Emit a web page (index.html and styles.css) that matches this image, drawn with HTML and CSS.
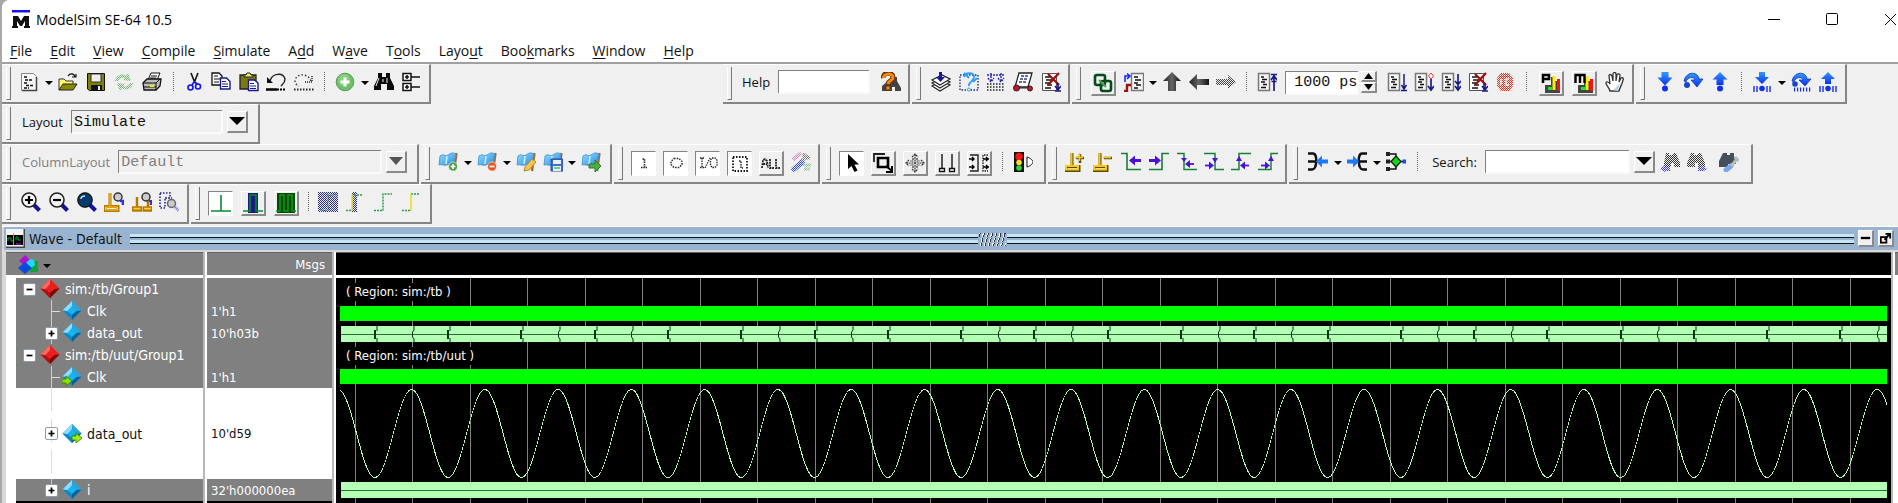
FILE: index.html
```html
<!DOCTYPE html>
<html lang="en">
<head>
<meta charset="utf-8">
<title>ModelSim SE-64 10.5</title>
<link rel="stylesheet" href="styles.css">
</head>
<body>
<svg class="defs" aria-hidden="true">
<defs>
<linearGradient id="gBlue" x1="0" y1="0" x2="1" y2="1"><stop offset="0" stop-color="#8fe0ff"/><stop offset="1" stop-color="#2b8be0"/></linearGradient>
<linearGradient id="gArrow" x1="0" y1="0" x2="0" y2="1"><stop offset="0" stop-color="#2f9bff"/><stop offset="1" stop-color="#1030f0"/></linearGradient>
<linearGradient id="gDark" x1="0" y1="0" x2="1" y2="0"><stop offset="0" stop-color="#222"/><stop offset=".5" stop-color="#666"/><stop offset="1" stop-color="#111"/></linearGradient>
<pattern id="dith" width="2" height="2" patternUnits="userSpaceOnUse"><path fill="#f0f0f0" d="M0 0h1v1H0zM1 1h1v1H1z"/></pattern>
<pattern id="dithBlue" width="2" height="2" patternUnits="userSpaceOnUse"><path fill="#2a2a90" d="M0 0h1v1H0zM1 1h1v1H1z"/></pattern>
<symbol id="page" viewBox="0 0 20 20"><path d="M2.500 1.500h12l3 3v14h-15z" fill="#f6f6f6" stroke="#888"/><path d="M17.500 5v13.500H3" fill="none" stroke="#444" stroke-width="1.500"/><path d="M5 5h4M6 8h8M5 11h4M7 13.500h7M5 16h5" stroke="#111" stroke-width="1.400" stroke-dasharray="3 1"/></symbol>
<symbol id="open" viewBox="0 0 20 20"><path d="M1 18V7h5l2 2h7v3" fill="#ffff70" stroke="#333"/><path d="M1 18l4-6h14l-4 6z" fill="#8a8a00" stroke="#222"/><path d="M10 4c2-3 6-3 7 1m-3 0h4V2" fill="none" stroke="#111" stroke-width="1.200"/></symbol>
<symbol id="save" viewBox="0 0 20 20"><path d="M2 1.500h16.500v17H3.500L1.500 17V1.500z" fill="#808000" stroke="#111"/><path d="M5 2h10v8H5z" fill="#eee" stroke="#333"/><path d="M5 13h11v5H5z" fill="#111"/><path d="M12 14h2v4h-2z" fill="#eee"/></symbol>
<symbol id="refresh" viewBox="0 0 20 20"><g fill="#6cb46c"><path d="M1 9c1-6 7-8 11-5l2-3 3 8-8-1 2-2c-3-1-6 0-7 3z"/><path d="M19 11c-1 6-7 8-11 5l-2 3-3-8 8 1-2 2c3 1 6 0 7-3z"/></g><path d="M0 0h20v20H0z" fill="url(#dith)"/></symbol>
<symbol id="print" viewBox="0 0 20 20"><path d="M6 8l3-7h9l-3 7z" fill="#fff" stroke="#111"/><path d="M9 4h6M8 6h6" stroke="#111"/><path d="M1 11l4-4h14l-1 7-4 4H2z" fill="#bbb" stroke="#111" stroke-width="1.300"/><path d="M1 11h13l4-4M14 11v7M2 15h12" stroke="#111" fill="none"/><path d="M8 13h4v2H8z" fill="#ee0"/></symbol>
<symbol id="cut" viewBox="0 0 20 20"><path d="M7 1l4 10M14 1l-4 10" stroke="#111" stroke-width="1.600"/><g fill="none" stroke="#1010f0" stroke-width="1.600"><path d="M10 10l-2 3M10.500 10l3 2"/><circle cx="6.500" cy="15.500" r="2.500"/><circle cx="14" cy="14.500" r="2.500"/></g></symbol>
<symbol id="copy" viewBox="0 0 20 20"><path d="M1 1h7l3 3v9H1z" fill="#fff" stroke="#111" stroke-width="1.300"/><path d="M3 4h4M3 7h6M3 10h5" stroke="#111"/><path d="M9.500 6h6l3.500 3.500V17H9.500z" fill="#fff" stroke="#1a1a90" stroke-width="1.400"/><path d="M11 9.500h4M11 12h6M11 14.500h6" stroke="#1a1a90"/></symbol>
<symbol id="paste" viewBox="0 0 20 20"><path d="M1 3h16v14H1z" fill="#7a7a10" stroke="#222" stroke-width="1.300"/><path d="M5 5V3h2l1-2h3l1 2h2v2z" fill="#ee6" stroke="#222"/><path d="M9.500 8h6l3.500 3v7.500H9.500z" fill="#fff" stroke="#1a1a90" stroke-width="1.400"/><path d="M11 11.500h4M11 14h6M11 16.500h6" stroke="#1a1a90"/></symbol>
<symbol id="undo" viewBox="0 0 20 20"><path d="M4 9c2-8 13-9 15-2 0 4-2 5-4 7" fill="none" stroke="#222" stroke-width="1.400"/><path d="M1 5v6h6z" fill="#111"/><path d="M0 17.500h11" stroke="#000" stroke-width="2.500"/><path d="M11 17.500h9" stroke="#000" stroke-width="2" stroke-dasharray="2 1"/></symbol>
<symbol id="redo" viewBox="0 0 20 20"><path d="M17 9C14 1 3 1 1 8c0 4 2 5 4 6" fill="none" stroke="#333" stroke-width="1.400" stroke-dasharray="1.500 2"/><path d="M18 4v6h-7" fill="none" stroke="#555" stroke-width="2" stroke-dasharray="1 1"/><path d="M0 17.500h20" stroke="#222" stroke-width="2" stroke-dasharray="1.500 1.500"/></symbol>
<symbol id="add" viewBox="0 0 20 20"><circle cx="10" cy="10" r="8.800" fill="#6cbf66" stroke="#58a058"/><circle cx="9" cy="8" r="6" fill="#9bd893" opacity=".6"/><path d="M10 5.500v9M5.500 10h9" stroke="#fff" stroke-width="3"/></symbol>
<symbol id="bino" viewBox="0 0 20 20"><path d="M4 1h4v4h4V1h4v5l4 8v4h-7v-6H7v6H0v-4l4-8z" fill="#0a0a0a"/><path d="M5 6l-3 8M13 6v5M9 7v3" stroke="#eee"/></symbol>
<symbol id="tree" viewBox="0 0 20 20"><g fill="#fff" stroke="#111" stroke-width="1.500"><path d="M2 1.500h8v7H2zM2 11.500h8v7H2z"/><path d="M10 5h9M10 15h9M4 5h4M6 3v4M4 15h4M6 13v4"/></g></symbol>
<symbol id="helpfind" viewBox="0 0 20 20"><path d="M8 8l4-3h4v4l4 7v3h-6v-4h-3v4H1v-5z" fill="#444"/><path d="M2.500 6C1.500 0 12 0 12 5c0 4-4 3-5 7" fill="none" stroke="#6a3000" stroke-width="5"/><path d="M2.500 6C2 1 12 1 12 5c0 4-4 3-5 7" fill="none" stroke="#f48a12" stroke-width="3"/><path d="M5 14h4v4H5z" fill="#f48a12" stroke="#6a3000"/></symbol>
<symbol id="stack" viewBox="0 0 20 20"><g fill="#fff" stroke="#222" stroke-width="1.200"><path d="M1 14l10-5 8 4-10 6z"/><path d="M1 11l10-5 8 4-10 6z"/><path d="M1 8l10-5 8 4-10 6z"/></g><path d="M8 0h3v5h3l-4.500 5L5 5h3z" fill="#1a1aa0"/></symbol>
<symbol id="boxquery" viewBox="0 0 20 20"><path d="M1 3h18v15H1z" fill="none" stroke="#222a80" stroke-width="1.400" stroke-dasharray="1.500 1.500"/><path d="M5 5c1-5 10-5 10 0 0 4-6 5-5 9M5 1l5 5m4 4l4-4" stroke="#2b9cff" stroke-width="1.800" fill="none"/><circle cx="10" cy="17.500" r="1.500" fill="#fff" stroke="#2b9cff"/></symbol>
<symbol id="downdots" viewBox="0 0 20 20"><path d="M1 12h18M1 15h18M1 18h18" stroke="#222" stroke-width="1.600" stroke-dasharray="1.500 1.500"/><path d="M5 1v8M15 1v8M1 3h18M2 6l3 4 3-4M12 6l3 4 3-4" stroke="#2626a8" stroke-width="1.400" fill="none" stroke-dasharray="2 1"/></symbol>
<symbol id="cart" viewBox="0 0 20 20"><path d="M6 1h13l-4 14H2z" fill="#fff" stroke="#222" stroke-width="1.300"/><path d="M8 4h7M7 7h7M6 10h7" stroke="#333a90" stroke-width="1.500" stroke-dasharray="3 1"/><circle cx="3.500" cy="16" r="3" fill="#d0102a" stroke="#222"/><circle cx="17" cy="16.500" r="2.500" fill="#d0102a" stroke="#222"/><path d="M6 16h8" stroke="#222"/></symbol>
<symbol id="pagex" viewBox="0 0 20 20"><path d="M1.500 1.500h14v17h-14z" fill="#fff" stroke="#555"/><path d="M4 5h5M5 8h6M4 11h5M6 13h5M4 16h6" stroke="#111" stroke-width="1.300"/><path d="M7 2l11 11M18 1L7 13" stroke="#9a1212" stroke-width="2.400"/><path d="M17 11v7m-3-4l3 4 3-4M14 19h6" stroke="#1a1a90" stroke-width="1.600" fill="none"/></symbol>
<symbol id="link" viewBox="0 0 20 20"><rect x="2" y="2" width="10" height="10" rx="2" fill="none" stroke="#054d18" stroke-width="2.600"/><rect x="8" y="8" width="10" height="10" rx="2" fill="none" stroke="#054d18" stroke-width="2.600"/><path d="M6 7l7 7" stroke="#5a9a60" stroke-width="2"/></symbol>
<symbol id="envpage" viewBox="0 0 20 20"><path d="M7.500 1.500h12v17h-12z" fill="#f5f5f5" stroke="#777" stroke-width="1.400"/><path d="M10 5h4M11 8h6M10 11h4M12 13h5M10 16h4" stroke="#111" stroke-width="1.300"/><path d="M1 10V4h4M3 1.500L6 4 3 7" fill="none" stroke="#1530f0" stroke-width="1.600"/><path d="M0 19h3v-6h4" fill="none" stroke="#a01010" stroke-width="2.400"/></symbol>
<symbol id="up" viewBox="0 0 20 20"><path d="M10 0l9 9h-5v10H6V9H1z" fill="url(#gDark)"/></symbol>
<symbol id="left" viewBox="0 0 20 20"><path d="M0 10l8-8v5h12v6H8v5z" fill="url(#gDark)"/></symbol>
<symbol id="right" viewBox="0 0 20 20"><path d="M20 10l-8-7v4H0v6h12v4z" fill="#444"/><path d="M0 0h20v20H0z" fill="url(#dith)"/></symbol>
<symbol id="runbase" viewBox="0 0 20 20"><path d="M1.500 1.500h11v17h-11z" fill="#f5f5f5" stroke="#777" stroke-width="1.500"/><path d="M4 5h3M5 7.500h5M4 10h4M6 12.500h4M4 15.500h5" stroke="#111" stroke-width="1.400"/></symbol>
<symbol id="restart" viewBox="0 0 20 20"><use href="#runbase"/><path d="M17 19V3M14 2.500h6M14 8l3-4 3 4M14.500 9.500h5" stroke="#1a1a90" stroke-width="1.700" fill="none"/></symbol>
<symbol id="run" viewBox="0 0 20 20"><use href="#runbase"/><path d="M17 2v14M14.500 13l2.500 4 2.500-4M14 18.500h6" stroke="#1a1a90" stroke-width="1.500" fill="none"/></symbol>
<symbol id="cont" viewBox="0 0 20 20"><use href="#runbase"/><path d="M17 7v11M14 14l3 4 3-4" stroke="#1a1a90" stroke-width="1.700" fill="none"/><path d="M17 1l2.500 3L17 7l-2.500-3z" fill="#fff" stroke="#e33"/></symbol>
<symbol id="runall" viewBox="0 0 20 20"><use href="#runbase"/><path d="M17 2v15M14 9l3 3.500L20 9M14 14l3 4 3-4" stroke="#1a1a90" stroke-width="1.700" fill="none"/></symbol>
<symbol id="stop" viewBox="0 0 20 20"><path d="M6 1h8l4 5v8l-4 5H6l-4-5V6z" fill="#e8301c"/><path d="M6 7v6M14 7h-3v6h3" stroke="#fff" stroke-width="1.500" fill="none"/><path d="M0 0h20v20H0z" fill="url(#dith)"/></symbol>
<symbol id="bars" viewBox="0 0 20 20"><path d="M4 12h6V4h4v4h5v12H4z" fill="#444"/><path d="M7 14h4v3H7z" fill="#1e2"/><path d="M11.500 3h3v14h-3z" fill="#fe0"/><path d="M16 6h3v12h-3z" fill="#f11"/></symbol>
<symbol id="profp" viewBox="0 0 20 20"><use href="#bars"/><path d="M2 10V2h6v4H2" fill="none" stroke="#000" stroke-width="2.500"/></symbol>
<symbol id="profm" viewBox="0 0 20 20"><use href="#bars"/><path d="M1.500 10V2h9v8M6 2v8" fill="none" stroke="#000" stroke-width="2.400"/></symbol>
<symbol id="hand" viewBox="0 0 20 20"><path d="M5 19c-1-4-4-6-4-8s3-1 4 1L4 4c0-2 2-2 3 0l1 5V2c0-2 3-2 3 0v7l1-6c0-2 3-1 3 0l-1 7 2-4c1-1 3 0 2 2-1 5-3 7-4 11z" fill="#fff" stroke="#333" stroke-width="1.300"/><path d="M7 18c3 0 5-5 8-7l-2 8z" fill="#bcd4f0"/></symbol>
<symbol id="stepin" viewBox="0 0 20 20"><path d="M6.500 0h7v5.500h4l-7.500 8-7.500-8h4z" fill="url(#gArrow)"/><circle cx="10" cy="16.500" r="3" fill="#1030f0"/></symbol>
<symbol id="stepover" viewBox="0 0 20 20"><path d="M1 9C3-1 15-1 16 7h4l-6 8-6-7h4c-1-4-8-3-9 2z" fill="url(#gArrow)" stroke="#0c3bc0" stroke-width=".8"/><circle cx="4" cy="13" r="3" fill="#1747c8"/></symbol>
<symbol id="stepout" viewBox="0 0 20 20"><path d="M10 0l7.500 7.500h-4v5.500h-7V7.500h-4z" fill="url(#gArrow)"/><circle cx="10" cy="16.500" r="3" fill="#1030f0"/></symbol>
<symbol id="cin" viewBox="0 0 20 20"><path d="M7 0h6v5h4l-7 7-7-7h4z" fill="url(#gArrow)"/><circle cx="10" cy="16.500" r="2.800" fill="#1030f0"/><path d="M2 14v6M5 14v6M15 14v6M18 14v6" stroke="#1030f0" stroke-width="1.400"/></symbol>
<symbol id="cover" viewBox="0 0 20 20"><path d="M1 9C3-1 15-1 16 7h4l-6 7-6-6h4c-1-4-8-3-9 2z" fill="url(#gArrow)" stroke="#0c3bc0" stroke-width=".8"/><circle cx="4" cy="12" r="2.800" fill="#1747c8"/><path d="M3 17.500h17" stroke="#1030f0" stroke-width="4" stroke-dasharray="1.200 1.800"/></symbol>
<symbol id="cout" viewBox="0 0 20 20"><path d="M10 0l7 7h-4v5H7V7H3z" fill="url(#gArrow)"/><circle cx="10" cy="16.500" r="2.800" fill="#1030f0"/><path d="M2 14v6M5 14v6M15 14v6M18 14v6" stroke="#1030f0" stroke-width="1.400"/></symbol>
<symbol id="flag" viewBox="0 0 20 20"><path d="M18.500 1L16 19" stroke="#a5682a" stroke-width="2.400"/><path d="M2 4c4-3 5 1 8-1s4-3 8-1l-2 10c-3-2-4 0-7 1s-5-1-8 0z" fill="url(#gBlue)" stroke="#3d8fd0" stroke-width=".8"/><path d="M9 4L8 12" stroke="#cdf0ff" stroke-width="1.500"/></symbol>
<symbol id="flagadd" viewBox="0 0 20 20"><use href="#flag"/><circle cx="15" cy="14.500" r="4.500" fill="#4f9a48" stroke="#fff" stroke-width=".6"/><path d="M15 12v5M12.500 14.500h5" stroke="#fff" stroke-width="1.600"/></symbol>
<symbol id="flagdel" viewBox="0 0 20 20"><use href="#flag"/><circle cx="15" cy="14.500" r="4.500" fill="#e8541c" stroke="#fff" stroke-width=".6"/><path d="M12.500 14.500h5" stroke="#fff" stroke-width="1.800"/></symbol>
<symbol id="flagedit" viewBox="0 0 20 20"><use href="#flag"/><path d="M8 19l1-4 7-8 4 3-7 8z" fill="#f2c850" stroke="#b8862a"/></symbol>
<symbol id="flagsave" viewBox="0 0 20 20"><use href="#flag"/><path d="M8 7h12v12H8z" fill="#3f6fd0" stroke="#27489a"/><path d="M10 8h8v4h-8z" fill="#e8f0ff"/><path d="M10 14h8v5h-8z" fill="#e8f0ff"/><path d="M11 16h6" stroke="#4c4" stroke-width="1.500"/></symbol>
<symbol id="flaggo" viewBox="0 0 20 20"><use href="#flag"/><path d="M8 12h6V8l6 6-6 6v-4H8z" fill="#4fae40" stroke="#2e7a28"/></symbol>
<symbol id="fin" viewBox="0 0 20 20"><path d="M8.500 6h2v8M7 14.500h6" stroke="#222" stroke-width="1.600" stroke-dasharray="1.500 .8" fill="none"/></symbol>
<symbol id="fout" viewBox="0 0 20 20"><path d="M8 5.500h5l3 3v3l-3 3H8l-3-3v-3z" stroke="#222" stroke-width="1.500" stroke-dasharray="1.500 1.200" fill="none"/></symbol>
<symbol id="fio" viewBox="0 0 20 20"><path d="M2 5h4M4 5v9M2 14.500h4M7 15l5-10M14 5h3l2 2v5l-2 2.500h-3L12.500 12V7z" stroke="#222" stroke-width="1.300" stroke-dasharray="1.500 1" fill="none"/></symbol>
<symbol id="fint" viewBox="0 0 20 20"><path d="M3 4h14v14H3z" stroke="#111" stroke-width="1.800" stroke-dasharray="1.500 1.500" fill="none"/><path d="M9 8h2v7h2" stroke="#222" stroke-width="1.500" stroke-dasharray="1.500 1" fill="none"/></symbol>
<symbol id="fall" viewBox="0 0 20 20"><path d="M1 15l1-8 2-1 2 2 1 7M2 11h4M9 6v9h4M15 6v9h4" stroke="#222" stroke-width="1.800" stroke-dasharray="2 .8" fill="none"/></symbol>
<symbol id="wrench" viewBox="0 0 20 20"><path d="M3 17l8-7" stroke="#2448e0" stroke-width="5.500" stroke-linecap="round"/><path d="M11 9l6-6M13 1v5h6" stroke="#777" stroke-width="3" fill="none"/><path d="M2 8l8-7" stroke="#d880c0" stroke-width="4"/><path d="M12 13h8M13 17h6" stroke="#88bc88" stroke-width="3"/><path d="M0 0h20v20H0z" fill="url(#dith)"/></symbol>
<symbol id="pointer" viewBox="0 0 20 20"><path d="M6 1v15l3.500-3 3 6 3-1.500-3-6H17z" fill="#000"/></symbol>
<symbol id="zoommode" viewBox="0 0 20 20"><path d="M1 9V1h11" fill="none" stroke="#222" stroke-width="1.800"/><path d="M5 5h10v9H5z" fill="none" stroke="#000" stroke-width="2.600"/><path d="M13 13l6 5m0-5v6h-6" stroke="#000" stroke-width="2" fill="none"/></symbol>
<symbol id="pan" viewBox="0 0 20 20"><path d="M10 1v18M1 10h18M7 4l3-3 3 3M7 16l3 3 3-3M4 7l-3 3 3 3M16 7l3 3-3 3M8 5v3H5M12 5v3h3M8 15v-3H5M12 15v-3h3" fill="none" stroke="#333" stroke-width="1.200" stroke-dasharray="2 .7"/></symbol>
<symbol id="twocur" viewBox="0 0 20 20"><path d="M5 1v14M15 1v14" stroke="#222" stroke-width="1.500"/><path d="M2.500 15.500h5v3h-5zM12.500 15.500h5v3h-5z" fill="#fff" stroke="#111" stroke-width="1.300"/></symbol>
<symbol id="editmode" viewBox="0 0 20 20"><path d="M1 2h8v16H1" fill="none" stroke="#222" stroke-width="1.400"/><path d="M19 2h-5v16h5" fill="none" stroke="#222" stroke-width="1.400" stroke-dasharray="1.500 1"/><path d="M0 6h5M0 14h5M14 6h6M14 14h6M3 4l2 2-2 2M3 12l2 2-2 2M17 4l2 2-2 2M17 12l2 2-2 2" fill="none" stroke="#000" stroke-width="1.400"/></symbol>
<symbol id="traffic" viewBox="0 0 20 20"><path d="M1 0h10v20H1z" fill="#111"/><circle cx="6" cy="4.500" r="3.700" fill="#f11"/><circle cx="6" cy="10.500" r="2.800" fill="#fd2"/><circle cx="6" cy="16" r="2.800" fill="#2d3"/><path d="M14 5c4 1 6 4 6 5s-2 4-6 5z" fill="#fff" stroke="#111"/></symbol>
<symbol id="curadd" viewBox="0 0 20 20"><g stroke="#5a4a10" fill="none"><path d="M7 1v13M1 14.500h13v4H1z" stroke-width="3"/><path d="M11 6h8M15 2v9" stroke-width="2.500"/></g><g stroke="#f8c818" fill="none"><path d="M6.500 1v13M1 14h12v3.500H1z" stroke-width="2"/><path d="M10 5.500h8M14.500 1v8" stroke-width="1.500"/></g></symbol>
<symbol id="curdel" viewBox="0 0 20 20"><g stroke="#5a4a10" fill="none"><path d="M7 1v13M1 14.500h13v4H1z" stroke-width="3"/><path d="M11 6h8" stroke-width="2.500"/></g><g stroke="#f8c818" fill="none"><path d="M6.500 1v13M1 14h12v3.500H1z" stroke-width="2"/><path d="M10 5.500h8" stroke-width="1.500"/></g></symbol>
<symbol id="prevtr" viewBox="0 0 20 20"><path d="M0 1.500h6v16h14" fill="none" stroke="#148038" stroke-width="1.600"/><path d="M8 8.500l6-5v3.500h6v3h-6v3.500z" fill="#4a12d8"/></symbol>
<symbol id="nexttr" viewBox="0 0 20 20"><path d="M0 17.500h13v-16h7" fill="none" stroke="#148038" stroke-width="1.600"/><path d="M12 8.500l-6-5v3.500H0v3h6v3.500z" fill="#4a12d8"/></symbol>
<symbol id="prevfall" viewBox="0 0 20 20"><path d="M0 1.500h7v16h13" fill="none" stroke="#148038" stroke-width="1.500"/><path d="M7 10L4 6h6zM8 12l5-4v8z" fill="#4a12d8"/><path d="M11 12h6" stroke="#4a12d8" stroke-width="1.800"/></symbol>
<symbol id="nextfall" viewBox="0 0 20 20"><path d="M0 1.500h11v16h9" fill="none" stroke="#148038" stroke-width="1.500"/><path d="M11 11L8 6h6zM10 13.500l-5-4v8z" fill="#4a12d8"/><path d="M1 13.500h6" stroke="#4a12d8" stroke-width="1.800"/></symbol>
<symbol id="prevrise" viewBox="0 0 20 20"><path d="M0 17.500h8v-16h12" fill="none" stroke="#148038" stroke-width="1.500"/><path d="M8 4L5 9h6zM9 13.500l5-4v8z" fill="#4a12d8"/><path d="M12 13.500h6" stroke="#4a12d8" stroke-width="1.800"/></symbol>
<symbol id="nextrise" viewBox="0 0 20 20"><path d="M0 17.500h13v-16h7" fill="none" stroke="#148038" stroke-width="1.500"/><path d="M13 4l-3 5h6zM12 13.500l-5-4v8z" fill="#4a12d8"/><path d="M3 13.500h6" stroke="#4a12d8" stroke-width="1.800"/></symbol>
<symbol id="drivers" viewBox="0 0 20 20"><path d="M0 1.500h5c5 0 4 16-1 16H0M0 9.500h8" fill="none" stroke="#111" stroke-width="2.500"/><path d="M8 9.500l6-6v4h6v4h-6v4z" fill="#1c78ff"/></symbol>
<symbol id="readers" viewBox="0 0 20 20"><path d="M20 1.500h-5c-5 0-4 16 1 16h4M20 9.500h-8" fill="none" stroke="#111" stroke-width="2.500"/><path d="M12 9.500l-6-6v4H0v4h6v4z" fill="#1c78ff"/></symbol>
<symbol id="expand" viewBox="0 0 20 20"><path d="M2 2h8v15H2M2 9.500h16" fill="none" stroke="#111" stroke-width="1.400"/><path d="M0 0h4v4H0zM0 7.500h4v4H0zM0 15h4v4H0z" fill="#222"/><path d="M10 4l5 5.500-5 5.500-5-5.500z" fill="#19d219" stroke="#053005" stroke-width="1.300"/><path d="M16.500 7.500H20v4h-3.500z" fill="#2246ff"/></symbol>
<symbol id="findprev" viewBox="0 0 20 20"><path d="M6 1h3v2h4V1h3l4 10v4h-6v-4h-3v4H4v-4z" fill="#333"/><path d="M0 17l5-4v2h5v4H5v1z" fill="#3540ff"/><path d="M0 0h20v20H0z" fill="url(#dith)"/></symbol>
<symbol id="findnext" viewBox="0 0 20 20"><path d="M4 1h3v2h4V1h3l4 10v4h-7v-4H8v4H0v-4z" fill="#333"/><path d="M20 17l-5-4v2h-4v4h4v1z" fill="#3540ff"/><path d="M0 0h20v20H0z" fill="url(#dith)"/></symbol>
<symbol id="findopt" viewBox="0 0 20 20"><path d="M4 1h4v2h3V1h4v3l2 8H9v3H0V9z" fill="#46505c"/><path d="M7 18l5-4" stroke="#78a8e8" stroke-width="5" stroke-linecap="round"/><path d="M12 14l6-7M16 5l4 4" stroke="#bbb" stroke-width="3"/></symbol>
<symbol id="lens" viewBox="0 0 20 20"><path d="M12.500 12.500l6 6" stroke="#14149a" stroke-width="4"/><circle cx="8" cy="8" r="7" fill="#f4f4f4" stroke="#222" stroke-width="1.600"/></symbol>
<symbol id="zin" viewBox="0 0 20 20"><use href="#lens"/><path d="M8 4v8M4 8h8" stroke="#000" stroke-width="2.200"/></symbol>
<symbol id="zout" viewBox="0 0 20 20"><use href="#lens"/><path d="M4 8h8" stroke="#000" stroke-width="2.200"/></symbol>
<symbol id="zfull" viewBox="0 0 20 20"><use href="#lens"/><circle cx="8" cy="8" r="7" fill="#063a6c" stroke="#111"/><path d="M4 7c0-2 2-3 4-3" stroke="#cde" stroke-width="1.500" fill="none"/></symbol>
<symbol id="zcur" viewBox="0 0 20 20"><g fill="none" stroke="#b87800"><path d="M6 1v13M1 14.500h13v4H1z" stroke-width="3"/></g><g fill="none" stroke="#ffd030"><path d="M6 1v13M1.500 15h12v3h-12z" stroke-width="1"/></g><circle cx="14" cy="5" r="4" fill="#ccc" stroke="#333" stroke-width="1.500"/><path d="M16 9h3v4" stroke="#3030e0" stroke-width="2.500" fill="none"/></symbol>
<symbol id="zbetw" viewBox="0 0 20 20"><g fill="none" stroke="#b87800" stroke-width="2.500"><path d="M5 5v10M1 15.500h8v3H1zM16 9v6M12 15.500h7v3h-7z"/></g><path d="M1.500 16.500h7M12 16.500h7" stroke="#ffd030" stroke-width="1.500"/><circle cx="14" cy="5" r="4" fill="#ccc" stroke="#333" stroke-width="1.500"/><path d="M17 9h2v4" stroke="#3030e0" stroke-width="2.200" fill="none"/></symbol>
<symbol id="zother" viewBox="0 0 20 20"><path d="M1 1h10v5H6v10H1zM6 6h7" fill="none" stroke="#22228a" stroke-width="1.600" stroke-dasharray="1.500 1.500"/><circle cx="12.500" cy="11.500" r="4" fill="#ccc" stroke="#666" stroke-width="1.500"/><path d="M16 15l4 4" stroke="#6a6af0" stroke-width="3" stroke-dasharray="1 1"/></symbol>
<symbol id="wline" viewBox="0 0 20 20"><path d="M0 18h20M10 18V2" fill="none" stroke="#0a8a30" stroke-width="1.600"/></symbol>
<symbol id="wblue" viewBox="0 0 20 20"><path d="M5 0h10v20H5z" fill="#1c1c80"/><path d="M0 18h7V2h6v16h7" fill="none" stroke="#0a8a30" stroke-width="1.600"/></symbol>
<symbol id="wgreen" viewBox="0 0 20 20"><path d="M1 0h18v20H1z" fill="#024a02"/><path d="M0 18h4V2h4v16h4V2h4v16h4" fill="none" stroke="#0b9a20" stroke-width="1.500"/></symbol>
<symbol id="wsel" viewBox="0 0 20 20"><path d="M0 0h20v20H0z" fill="url(#dithBlue)"/><path d="M2 18h8V3h10" fill="none" stroke="#5aa080" stroke-width="1.500" stroke-dasharray="1.500 1"/></symbol>
<symbol id="whalf" viewBox="0 0 20 20"><path d="M7 0h5v20H7z" fill="url(#dithBlue)"/><path d="M7 2v17" stroke="#e8e020" stroke-width="1.500"/><path d="M1 18.500h5M9 3h9" stroke="#2a9a50" stroke-width="1.500" stroke-dasharray="2 1"/></symbol>
<symbol id="wstep" viewBox="0 0 20 20"><path d="M1 18.500h9V2h9" fill="none" stroke="#2a9a50" stroke-width="1.500" stroke-dasharray="2 1"/></symbol>
<symbol id="wstepy" viewBox="0 0 20 20"><path d="M1 18.500h9M10 2h9" fill="none" stroke="#2a9a50" stroke-width="1.500" stroke-dasharray="2 1"/><path d="M10 2v17" stroke="#e8e020" stroke-width="1.600"/></symbol>
<symbol id="dia" viewBox="0 0 20 20"><path d="M10 0l9.500 9.500L10 19 .500 9.500z" fill="#16b4f0"/><path d="M10 0L.500 9.500l4.500 1L10 5z" fill="#8fdcfa"/><path d="M10 0l9.500 9.500-5 .500L10 5z" fill="#2ba4dc"/><path d="M19.500 9.500L10 19v-5l4.500-4z" fill="#0a5f96"/><path d="M.500 9.500L10 19v-5L5 10z" fill="#1286c4"/></symbol>
<symbol id="dia-in" viewBox="0 0 20 20"><use href="#dia"/><path d="M0 12h4V9l6 5-6 5v-3H0z" fill="#8be000" stroke="#2f7a00" stroke-width=".8"/></symbol>
<symbol id="dia-out" viewBox="0 0 20 20"><use href="#dia"/><path d="M10 12h4V9l6 5-6 5v-3h-4z" fill="#a0ee10" stroke="#2f7a00" stroke-width=".8"/></symbol>
<symbol id="dia-red" viewBox="0 0 20 20"><path d="M10 0l9.500 9.500L10 19 .500 9.500z" fill="#e82020"/><path d="M10 0L.500 9.500l4.500 1L10 5z" fill="#ff6a5a"/><path d="M19.500 9.500L10 19v-5l4.500-4z" fill="#7a0606"/><path d="M.500 9.500L10 19v-5L5 10z" fill="#b01010"/></symbol>
</defs>
</svg>

<div class="window">
<header class="head">
  <div class="titlebar">
    <svg class="logo" viewBox="0 0 18 18" aria-hidden="true"><path d="M0 0h18v2.500H0z" fill="#1414f0"/><path d="M1 6h5l3 5 3-5h5v10h1v2h-6v-2h1v-5l-3 5H8l-3-5v5h1v2H0v-2h1z" fill="#111"/></svg>
    <h1>ModelSim SE-64 10.5</h1>
    <button class="win" aria-label="Minimize"><svg viewBox="0 0 16 16"><path d="M2 8.500h12" stroke="#000"/></svg></button>
    <button class="win" aria-label="Maximize"><svg viewBox="0 0 16 16"><rect x="2.500" y="2.500" width="11" height="11" rx="1" fill="none" stroke="#000"/></svg></button>
    <button class="win" aria-label="Close"><svg viewBox="0 0 16 16"><path d="M3 3l11 11M14 3L3 14" stroke="#000"/></svg></button>
  </div>
  <nav class="menu">
    <button><u>F</u>ile</button><button><u>E</u>dit</button><button><u>V</u>iew</button><button><u>C</u>ompile</button><button><u>S</u>imulate</button><button>A<u>d</u>d</button><button>W<u>a</u>ve</button><button>T<u>o</u>ols</button><button>Layo<u>u</u>t</button><button>Boo<u>k</u>marks</button><button><u>W</u>indow</button><button><u>H</u>elp</button>
  </nav>
</header>

<div class="row">
  <div class="bar">
    <button class="b" aria-label="New"><svg><use href="#page"/></svg></button><button class="arr" aria-label="New options"></button>
    <button class="b" aria-label="Open"><svg><use href="#open"/></svg></button>
    <button class="b" aria-label="Save"><svg><use href="#save"/></svg></button>
    <button class="b" aria-label="Reload"><svg><use href="#refresh"/></svg></button>
    <button class="b" aria-label="Print"><svg><use href="#print"/></svg></button>
    <i class="sep"></i>
    <button class="b n" aria-label="Cut"><svg><use href="#cut"/></svg></button>
    <button class="b" aria-label="Copy"><svg><use href="#copy"/></svg></button>
    <button class="b n" aria-label="Paste"><svg><use href="#paste"/></svg></button>
    <button class="b" aria-label="Undo"><svg><use href="#undo"/></svg></button>
    <button class="b n" aria-label="Redo"><svg><use href="#redo"/></svg></button>
    <i class="sep"></i>
    <button class="b" aria-label="Add"><svg><use href="#add"/></svg></button><button class="arr" aria-label="Add options"></button>
    <button class="b n" aria-label="Find"><svg><use href="#bino"/></svg></button>
    <button class="b n" aria-label="Collapse all"><svg><use href="#tree"/></svg></button>
  </div>
  <div class="gap"></div>
  <div class="bar help">
    <label for="help">Help</label><input id="help" class="field" type="text">
    <button class="b" aria-label="Search help"><svg><use href="#helpfind"/></svg></button>
  </div>
  <div class="bar in">
    <button class="b" aria-label="Compile"><svg><use href="#stack"/></svg></button>
    <button class="b n" aria-label="Compile out of date"><svg><use href="#boxquery"/></svg></button>
    <button class="b n" aria-label="Compile all"><svg><use href="#downdots"/></svg></button>
    <button class="b" aria-label="Simulate"><svg><use href="#cart"/></svg></button>
    <button class="b" aria-label="Break"><svg><use href="#pagex"/></svg></button>
  </div>
  <div class="bar in">
    <button class="box raised" aria-label="Link"><svg><use href="#link"/></svg></button>
    <button class="b n" aria-label="Environment"><svg><use href="#envpage"/></svg></button><button class="arr" aria-label="Environment options"></button>
    <button class="b n" aria-label="Up"><svg><use href="#up"/></svg></button>
    <button class="b n" aria-label="Back"><svg><use href="#left"/></svg></button>
    <button class="b n" aria-label="Forward"><svg><use href="#right"/></svg></button>
    <i class="sep"></i>
    <button class="b" aria-label="Restart"><svg><use href="#restart"/></svg></button>
    <input class="field time" type="text" value="1000 ps" aria-label="Run length">
    <span class="spin"><button class="raised" aria-label="Increase"><svg viewBox="0 0 14 9"><path d="M7 1l5 7H2z"/></svg></button><button class="raised" aria-label="Decrease"><svg viewBox="0 0 14 9"><path d="M7 8l5-7H2z"/></svg></button></span>
    <button class="b n" aria-label="Run"><svg><use href="#run"/></svg></button>
    <button class="b n" aria-label="Continue run"><svg><use href="#cont"/></svg></button>
    <button class="b n" aria-label="Run all"><svg><use href="#runall"/></svg></button>
    <button class="b n" aria-label="Break run"><svg><use href="#pagex"/></svg></button>
    <button class="b n" aria-label="Stop"><svg><use href="#stop"/></svg></button>
    <i class="sep wide"></i>
    <button class="box raised" aria-label="Performance profile"><svg><use href="#profp"/></svg></button>
    <button class="box raised" aria-label="Memory profile"><svg><use href="#profm"/></svg></button>
    <button class="b" aria-label="Hold"><svg><use href="#hand"/></svg></button>
  </div>
  <div class="bar in">
    <button class="b" aria-label="Step into"><svg><use href="#stepin"/></svg></button>
    <button class="b n" aria-label="Step over"><svg><use href="#stepover"/></svg></button>
    <button class="b" aria-label="Step out"><svg><use href="#stepout"/></svg></button>
    <i class="sep"></i>
    <button class="b" aria-label="Step into current"><svg><use href="#cin"/></svg></button><button class="arr" aria-label="Step options"></button>
    <button class="b n" aria-label="Step over current"><svg><use href="#cover"/></svg></button>
    <button class="b" aria-label="Step out current"><svg><use href="#cout"/></svg></button>
  </div>
</div>

<div class="row">
  <div class="bar combo">
    <label for="layout">Layout</label>
    <select id="layout" class="field layout"><option>Simulate</option></select>
    <button class="drop raised" aria-label="Show layouts"><svg viewBox="0 0 16 10"><path d="M0 1h16L8 9z"/></svg></button>
  </div>
</div>

<div class="row">
  <div class="bar combo">
    <label for="cols" class="dim">ColumnLayout</label>
    <select id="cols" class="field cols" disabled><option>Default</option></select>
    <button class="drop raised" aria-label="Show column layouts" disabled><svg viewBox="0 0 16 10"><path d="M1 1h14L8 9z" fill="#555"/></svg></button>
  </div>
  <div class="bar">
    <button class="b" aria-label="Add bookmark"><svg><use href="#flagadd"/></svg></button><button class="arr" aria-label="Add bookmark options"></button>
    <button class="b" aria-label="Delete bookmark"><svg><use href="#flagdel"/></svg></button><button class="arr" aria-label="Delete bookmark options"></button>
    <button class="b n" aria-label="Manage bookmarks"><svg><use href="#flagedit"/></svg></button>
    <button class="b n" aria-label="Save bookmarks"><svg><use href="#flagsave"/></svg></button><button class="arr" aria-label="Save bookmarks options"></button>
    <button class="b" aria-label="Jump to bookmark"><svg><use href="#flaggo"/></svg></button>
  </div>
  <div class="bar tight">
    <button class="box sunk" aria-label="Inputs"><svg><use href="#fin"/></svg></button>
    <button class="box sunk" aria-label="Outputs"><svg><use href="#fout"/></svg></button>
    <button class="box sunk" aria-label="In-outs"><svg><use href="#fio"/></svg></button>
    <button class="box sunk" aria-label="Internals"><svg><use href="#fint"/></svg></button>
    <button class="box raised" aria-label="All signals"><svg><use href="#fall"/></svg></button>
    <button class="b" aria-label="Filter options"><svg><use href="#wrench"/></svg></button>
  </div>
  <div class="bar tight modes">
    <button class="box sunk" aria-label="Select mode"><svg><use href="#pointer"/></svg></button>
    <button class="box raised" aria-label="Zoom mode"><svg><use href="#zoommode"/></svg></button>
    <button class="box raised" aria-label="Pan mode"><svg><use href="#pan"/></svg></button>
    <button class="box raised" aria-label="Two cursor mode"><svg><use href="#twocur"/></svg></button>
    <button class="box raised" aria-label="Edit mode"><svg><use href="#editmode"/></svg></button>
    <i class="sep"></i>
    <button class="b n" aria-label="Stop drawing"><svg><use href="#traffic"/></svg></button>
  </div>
  <div class="bar end">
    <button class="b" aria-label="Insert cursor"><svg><use href="#curadd"/></svg></button>
    <button class="b" aria-label="Delete cursor"><svg><use href="#curdel"/></svg></button>
    <button class="b" aria-label="Previous transition"><svg><use href="#prevtr"/></svg></button>
    <button class="b" aria-label="Next transition"><svg><use href="#nexttr"/></svg></button>
    <button class="b n" aria-label="Previous falling edge"><svg><use href="#prevfall"/></svg></button>
    <button class="b n" aria-label="Next falling edge"><svg><use href="#nextfall"/></svg></button>
    <button class="b n" aria-label="Previous rising edge"><svg><use href="#prevrise"/></svg></button>
    <button class="b n" aria-label="Next rising edge"><svg><use href="#nextrise"/></svg></button>
  </div>
  <div class="bar in search">
    <button class="b" aria-label="Show drivers"><svg><use href="#drivers"/></svg></button><button class="arr" aria-label="Driver options"></button>
    <button class="b" aria-label="Show readers"><svg><use href="#readers"/></svg></button><button class="arr" aria-label="Reader options"></button>
    <button class="b" aria-label="Expand net"><svg><use href="#expand"/></svg></button>
    <i class="sep"></i>
    <label for="search">Search:</label><input id="search" class="field" type="text">
    <button class="drop raised" aria-label="Search history"><svg viewBox="0 0 16 10"><path d="M0 1h16L8 9z"/></svg></button>
    <button class="b n" aria-label="Find previous"><svg><use href="#findprev"/></svg></button>
    <button class="b n" aria-label="Find next"><svg><use href="#findnext"/></svg></button>
    <button class="b opt" aria-label="Search options"><svg><use href="#findopt"/></svg></button>
  </div>
</div>

<div class="row">
  <div class="bar in end">
    <button class="b" aria-label="Zoom in"><svg><use href="#zin"/></svg></button>
    <button class="b" aria-label="Zoom out"><svg><use href="#zout"/></svg></button>
    <button class="b n" aria-label="Zoom full"><svg><use href="#zfull"/></svg></button>
    <button class="b" aria-label="Zoom on cursor"><svg><use href="#zcur"/></svg></button>
    <button class="b n" aria-label="Zoom between cursors"><svg><use href="#zbetw"/></svg></button>
    <button class="b" aria-label="Zoom other window"><svg><use href="#zother"/></svg></button>
  </div>
  <div class="bar">
    <button class="box sunk" aria-label="Contour line"><svg><use href="#wline"/></svg></button>
    <button class="box raised" aria-label="Contour blue"><svg><use href="#wblue"/></svg></button>
    <button class="box raised" aria-label="Contour green"><svg><use href="#wgreen"/></svg></button>
    <i class="sep slim"></i>
    <button class="b n" aria-label="Expanded time off"><svg><use href="#wsel"/></svg></button>
    <button class="b" aria-label="Expanded time deltas"><svg><use href="#whalf"/></svg></button>
    <button class="b" aria-label="Expand all time"><svg><use href="#wstep"/></svg></button>
    <button class="b" aria-label="Expand time at cursor"><svg><use href="#wstepy"/></svg></button>
  </div>
</div>

<section class="wave">
  <div class="wave-title">
    <svg class="wave-icon" viewBox="0 0 19 19" aria-hidden="true"><path d="M0 0h19v19H0z" fill="#444"/><path d="M0 0h17.500v17.500H0z" fill="#f4f4f4"/><path d="M1 6h16v10H1z" fill="#000"/><path d="M2 12V9h3v3h2M10 11V8h2v3h3" stroke="#0aa030" fill="none"/><path d="M7.500 4v12" stroke="#2cd"/><path d="M10 15h5" stroke="#a2e"/></svg>
    <h2>Wave - Default</h2>
    <i class="rail"></i><i class="grip"></i><i class="rail"></i>
    <button class="raised tiny" aria-label="Minimize pane"><svg viewBox="0 0 14 14"><path d="M2 7h10" stroke="#000" stroke-width="2.500"/></svg></button>
    <button class="raised tiny" aria-label="Undock pane"><svg viewBox="0 0 14 14"><path d="M2 6h6v6H2z" fill="none" stroke="#000" stroke-width="1.800"/><path d="M6 9l5-6M7 2.500h5v5" fill="none" stroke="#000" stroke-width="2"/></svg></button>
  </div>
  <div class="panes">
    <div class="pane names">
      <div class="phead"><svg class="cubes" viewBox="0 0 20 19" aria-hidden="true"><path d="M12 6h8v11h-8z" fill="#14a038"/><path d="M1 6l6-6 6 6-6 5z" fill="#b010d0"/><path d="M8 8l4-4 4 1 1 5-5 4z" fill="#20d8f8"/><path d="M0 13l7-6 7 6-7 6z" fill="#0a48e0"/></svg><button class="arr" aria-label="Signal options"></button></div>
      <ul class="tree">
        <li class="group"><button class="pm" aria-label="Collapse"><svg viewBox="0 0 13 13"><path d="M3 6.500h7" stroke="#000" stroke-width="2"/></svg></button><svg class="dia"><use href="#dia-red"/></svg>sim:/tb/Group1</li>
        <li class="sig"><i class="tee"></i><svg class="dia"><use href="#dia"/></svg>Clk</li>
        <li class="sig"><button class="pm" aria-label="Expand"><svg viewBox="0 0 13 13"><path d="M3 6.500h7M6.500 3v7" stroke="#000" stroke-width="2"/></svg></button><svg class="dia"><use href="#dia"/></svg>data_out</li>
        <li class="group"><button class="pm" aria-label="Collapse"><svg viewBox="0 0 13 13"><path d="M3 6.500h7" stroke="#000" stroke-width="2"/></svg></button><svg class="dia"><use href="#dia-red"/></svg>sim:/tb/uut/Group1</li>
        <li class="sig"><i class="tee"></i><svg class="dia"><use href="#dia-in"/></svg>Clk</li>
        <li class="sig tall"><button class="pm" aria-label="Expand"><svg viewBox="0 0 13 13"><path d="M3 6.500h7M6.500 3v7" stroke="#000" stroke-width="2"/></svg></button><svg class="dia"><use href="#dia-out"/></svg>data_out</li>
        <li class="sig last"><button class="pm" aria-label="Expand"><svg viewBox="0 0 13 13"><path d="M3 6.500h7M6.500 3v7" stroke="#000" stroke-width="2"/></svg></button><svg class="dia"><use href="#dia"/></svg>i</li>
      </ul>
    </div>
    <i class="sash"></i>
    <div class="pane values">
      <div class="phead right">Msgs</div>
      <ul>
        <li></li><li>1'h1</li><li>10'h03b</li><li></li><li>1'h1</li><li class="tall">10'd59</li><li>32'h000000ea</li>
      </ul>
    </div>
    <i class="sash"></i>
    <div class="pane plot">
      <div class="phead"></div>
      <svg id="plot" role="img" aria-label="Waveforms"></svg>
    </div>
    <i class="sash"></i>
    <div class="pane edge"><div class="phead"></div></div>
  </div>
</section>
</div>
<script src="wave.js"></script>
</body>
</html>
```
FILE: wave.js
```js
const NS = "http://www.w3.org/2000/svg";
const plot = document.getElementById("plot");
const FIRST_PEAK = 75.5, PERIOD = 73.28, GRID = 57.5;
const MINOR_SKIP = [1, 4, 7, 10, 13, 16, 18, 19];

function put(name, attrs, text) {
  const el = document.createElementNS(NS, name);
  for (const key in attrs) el.setAttribute(key, attrs[key]);
  if (text) el.textContent = text;
  plot.append(el);
}

function markMajor(x) {
  put("path", { class: "change", d: `M${x + 2} 48v5M${x + 2} 60v5` });
  put("path", { class: "change bold", d: `M${x} 52v9` });
}

function markMinor(x) {
  put("path", { class: "change", d: `M${x + 2} 48v4l-1.500 2v5l1.500 2v4` });
}

function draw() {
  plot.replaceChildren();
  const width = plot.clientWidth;
  const end = width - 4;

  for (let x = 19; x < width; x += GRID)
    put("path", { class: "grid", d: `M${Math.floor(x) + 0.5} 0V230` });

  [["( Region: sim:/tb )", 13, 110], ["( Region: sim:/tb/uut )", 77, 134]].forEach(([text, y, w]) => {
    put("rect", { x: 9, y: y - 8, width: w, height: 18 });
    put("text", { x: 10, y: y + 5 }, text);
  });

  put("rect", { class: "clk", x: 4, y: 28, width: end - 4, height: 15 });
  put("rect", { class: "clk", x: 4, y: 91, width: end - 4, height: 15 });

  for (const y of [48, 204]) {
    put("rect", { class: "bus", x: 5, y, width: end - 5, height: 16 });
    put("path", { class: "mid", d: `M5 ${y + 8.5}H${end}` });
  }

  for (let k = 0; FIRST_PEAK + (k - 0.5) * PERIOD < end; k++) {
    markMajor(Math.round(FIRST_PEAK + (k - 0.5) * PERIOD));
    const peak = Math.round(FIRST_PEAK + k * PERIOD);
    if (!MINOR_SKIP.includes(k) && peak < end) markMinor(peak);
  }

  const level = x => 155.5 - 44 * Math.cos((x - FIRST_PEAK) / PERIOD * 2 * Math.PI);
  let d = "";
  for (let x = 4; x < end; x++) {
    const from = level(x), to = level(x + 1);
    const reach = to < from ? 0.75 : 1;
    d += `M${x} ${from.toFixed(1)}L${x + reach} ${(from + (to - from) * reach).toFixed(1)}`;
  }
  put("path", { class: "sine", d });
}

draw();
window.addEventListener("resize", draw);
```
FILE: styles.css
```css
* { box-sizing: border-box; }
body { margin: 0; height: 100vh; overflow: hidden; background: #a8a8a8; font: 14px "Open Sans", "Noto Sans", sans-serif; color: #111; }
button { border: 0; padding: 0; margin: 0; background: none; font: inherit; color: inherit; flex: none; }
ul { list-style: none; margin: 0; padding: 0; }
h1, h2 { margin: 0; font-weight: 400; }
i { font-style: normal; }
.defs { position: absolute; width: 0; height: 0; }

.window { display: flex; flex-direction: column; min-height: 100vh; margin-left: 2px; background: #f0f0f0; border-top-left-radius: 8px; }
.head { background: #fff; border-bottom: 2px solid #a0a0a0; border-top-left-radius: 8px; }
.titlebar { display: flex; align-items: center; height: 38px; padding-left: 10px; gap: 42px; }
.logo { width: 18px; height: 18px; margin-right: -36px; }
.titlebar h1 { flex: 1; font-size: 14px; color: #000; }
.win, .win svg { display: block; width: 16px; height: 16px; }
.menu { display: flex; gap: 18px; height: 24px; padding-left: 8px; align-items: center; }
.menu u { text-underline-offset: 2px; }

.row { display: flex; height: 40px; gap: 2px; }
.gap { width: 288px; }
.bar { position: relative; display: flex; align-items: center; padding: 0 5px 4px 13px; border-top: 1px solid #fff; border-right: 2px solid #858585; border-bottom: 2px solid #858585; flex: none; }
.bar::before { content: ""; position: absolute; left: 4px; top: 2px; bottom: 2px; width: 3px; border-right: 1px solid #777; border-bottom: 1px solid #777; border-left: 1px solid #fff; }
.bar.in { padding-left: 15px; padding-right: 3px; }
.bar.end { padding-right: 4px; }
.bar.tight { padding-right: 3px; }
.bar.modes { padding-right: 8px; }
.bar label { margin-right: 8px; font-size: 13px; }
.bar .dim { color: #808080; }
.b { display: flex; justify-content: center; width: 28px; }
.b.n { width: 27px; }
.b svg, .box svg { width: 20px; height: 20px; flex: none; }
.arr { width: 11px; height: 20px; display: flex; align-items: center; justify-content: center; }
.arr::after { content: ""; border: 4px solid transparent; border-top: 4px solid #000; border-bottom: 0; margin-top: 3px; }
.sep { width: 14px; height: 20px; background: repeating-linear-gradient(#666 0 1px, transparent 1px 2px) center / 1px 100% no-repeat; }
.sep.wide { width: 17px; }
.sep.slim { width: 11px; }
.box { display: flex; align-items: center; justify-content: center; width: 25px; height: 25px; margin: 3px 4px 0; }
.tight .box { margin-right: 3px; }
.raised { background: #f0f0f0; border: 1px solid #fff; border-right: 2px solid #8a8a8a; border-bottom: 2px solid #8a8a8a; }
.sunk { background: #fff; border: 1px solid #858585; border-right-color: #fff; border-bottom-color: #fff; }
.field { height: 24px; margin: 0; padding: 0 0 0 2px; background: #fff; border: 2px solid #fafafa; border-top: 1px solid #808080; border-left: 1px solid #808080; border-radius: 0; outline: 0; font: 15px "Liberation Mono", monospace; color: #111; }
select.field { appearance: none; background: #f0f0f0; opacity: 1; padding: 3px 0 0 2px; }
select.field:disabled { color: #808080; }
.help { padding-left: 19px; padding-right: 3px; }
.help .field { width: 92px; margin-right: 7px; }
.time { width: 74px; margin: 2px 2px 0 4px; padding-left: 8px; }
.spin { display: flex; flex-direction: column; width: 16px; margin-right: 6px; }
.spin button { height: 11px; }
.spin svg { display: block; width: 13px; height: 8px; }
.combo { padding: 0 10px 4px 20px; }
.layout { width: 152px; }
.cols { width: 264px; }
.drop { display: flex; align-items: center; justify-content: center; width: 21px; height: 22px; margin-left: 4px; }
.drop svg { width: 16px; height: 10px; }
.search label { margin-left: 8px; }
.search .field { width: 145px; }
.search .drop { margin-right: 2px; }
.search .opt { margin: 0 5px 0 4px; }

.wave { flex: 1; display: flex; flex-direction: column; margin-top: 2px; border-top: 1px solid #fff; background: #d8d8d8; padding-left: 2px; font: 13px "DejaVu Sans Condensed", "DejaVu Sans", sans-serif; }
.wave-title { display: flex; align-items: center; height: 23px; background: #99b4d1; padding: 0 4px 0 2px; }
.wave-icon { width: 19px; height: 19px; margin-right: 4px; }
.wave-title h2 { font-size: 14px; margin-right: 8px; }
.rail { flex: 1; height: 10px; background: linear-gradient(#c4e6f4 0 3px, #10151c 3px 4px, #99b4d1 4px 6px, #c4e6f4 6px 9px, #10151c 9px 10px); }
.grip { width: 27px; height: 14px; margin: 0 1px; background: repeating-linear-gradient(#99b4d1 0 1px, transparent 1px 5px), repeating-linear-gradient(105deg, #e8f4fa 0 1px, #334 1px 2px, #99b4d1 2px 4px); }
.tiny { width: 16px; height: 17px; margin-left: 4px; }
.tiny svg { display: block; width: 13px; height: 14px; }

.panes { flex: 1; display: flex; margin-top: 2px; }
.pane { display: flex; flex-direction: column; }
.phead { display: flex; align-items: center; height: 23px; background: #808080; color: #fff; margin-bottom: 3px; border-top: 1px solid #666; }
.phead.right { justify-content: flex-end; padding-right: 7px; }
.sash { width: 4px; background: #fff; border-left: 2px solid #b8b8b8; }
.names { width: 197px; margin-left: 2px; background: #fff; font-size: 14px; }
.cubes { width: 20px; height: 19px; margin: 0 3px 0 12px; }
.values { width: 125px; background: #fff; }
.names .tree { margin-left: 10px; }
.pane ul { border-bottom: 2px solid #000; }
.pane li { display: flex; align-items: center; height: 22px; background-color: #808080; color: #fff; }
.pane li.tall { height: 91px; background-color: #fff; color: #111; }
.values li { padding-left: 4px; }
.group { padding-left: 7px; }
.sig { padding-left: 29px; background: linear-gradient(#ccc 0 0) 35px 0 / 1px 100% no-repeat; }
.sig.tall { background-image: repeating-linear-gradient(#ddd 0 23px, transparent 23px 31px); }
.sig.last { background-size: 1px 11px; }
.tee { width: 9px; height: 1px; margin: 0 0 0 6px; background: #ddd; }
.pm { width: 13px; height: 13px; background: #fff; border: 1px solid #8a9ab8; border-radius: 2px; }
.pm svg { display: block; width: 11px; height: 11px; }
.dia { width: 20px; height: 20px; margin: 0 5px 0 4px; flex: none; }
.tee + .dia { margin-left: 2px; }
.plot { flex: 1; min-width: 0; background: #000; }
.plot .phead { background: #000; box-shadow: 0 3px #fff; }
#plot { display: block; width: 100%; height: 230px; }
#plot text { fill: #fff; font-size: 13px; }
.grid { stroke: #808080; }
.clk { fill: #0f0; }
.bus { fill: #b3ffb3; }
.mid { stroke: #2f6a3a; }
.change { fill: none; stroke: #031; stroke-width: 1; }
.change.bold { stroke-width: 2; }
.sine { fill: none; stroke: #b3ffb3; stroke-width: 1; shape-rendering: crispEdges; }
.edge { width: 3px; background: #fff; }
```
